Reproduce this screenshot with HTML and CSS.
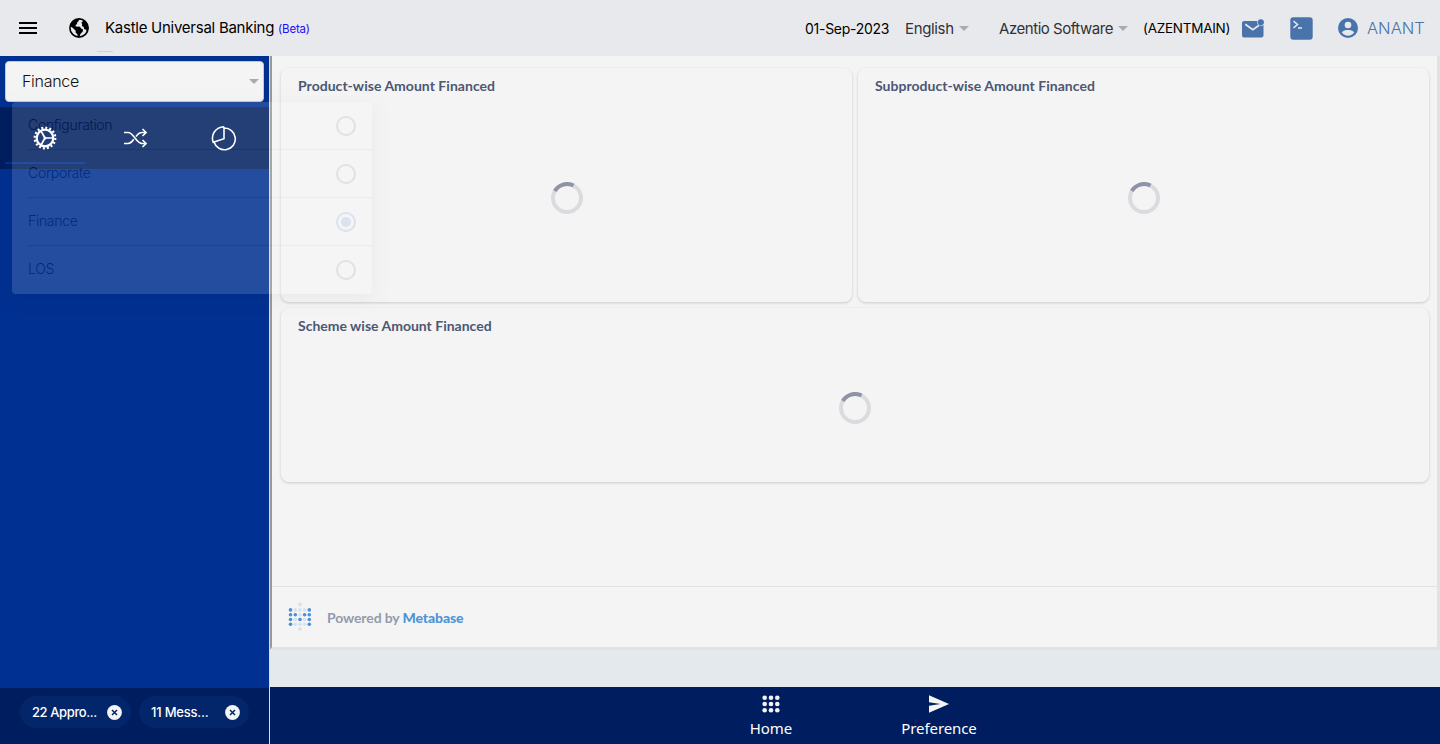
FILE: index.html
```html
<!DOCTYPE html>
<html lang="en">
<head>
<meta charset="utf-8">
<title>Kastle Universal Banking</title>
<link rel="stylesheet" href="styles.css">
</head>
<body>
<header class="topbar">
  <svg class="burger" width="18" height="12" viewBox="0 0 18 12"><path d="M0 0h18v2H0zM0 5h18v2H0zM0 10h18v2H0z"/></svg>
  <svg class="globe" width="20" height="20" viewBox="0 0 20 20"><circle cx="10" cy="10" r="9.1" fill="none" stroke="#000" stroke-width="1.6"/><path d="M2 5.500 7.500 1.200 10 1l-.3 2-1.600 1.400v1.500l-1.500 1 .1 1.600 4.200.2 1.300 1.900 1.800.8-.2 2-2.400 2.500-.8 2.600-1.700.4-.6-2.600L6.600 14.500l.1-1.700L3.600 9.700 1.200 8.200zM12.500 1.800l1.200.3-.2 1.800-1.300.7 1 1.300-.3 2 1.900 1.200.3 2.200 2.100.1.400 2.700 1.900-3.400-.4-4L16.300 3z"/></svg>
  <div class="brand"><span class="brand-name">Kastle Universal Banking</span><span class="beta">(Beta)</span><i class="brand-line"></i></div>
  <div class="date">01-Sep-2023</div>
  <div class="pick lang"><span>English</span><i class="caret"></i></div>
  <div class="pick company"><span>Azentio Software</span><i class="caret"></i></div>
  <div class="branch">(AZENTMAIN)</div>
  <svg class="mail" width="22" height="19" viewBox="0 0 22 19"><path d="M2 2h13.200a3.900 3.900 0 0 0 6.300 4v10.500a2 2 0 0 1-2 2H2a2 2 0 0 1-2-2V4a2 2 0 0 1 2-2z" fill="#4974ab"/><circle cx="18.800" cy="3.300" r="3.100" fill="#4974ab"/><path d="m3.300 5.200 7.500 5.600 6-4.300" fill="none" stroke="#e8e9ed" stroke-width="1.700"/></svg>
  <svg class="term" width="23" height="23" viewBox="0 0 23 23"><rect x=".3" y=".3" width="22.400" height="22.400" rx="3" fill="#4974ab"/><path d="m3.500 4.200 4 3.300-4 3.300M8 11h4" fill="none" stroke="#e8e9ed" stroke-width="1.500"/></svg>
  <svg class="user" width="20" height="20" viewBox="0 0 20 20"><circle cx="10" cy="10" r="10" fill="#4974ab"/><circle cx="10" cy="7" r="3.300" fill="#e8e9ed"/><path d="M3.800 14.300C5 12.500 7.700 12 10 12s5 .5 6.200 2.300a7.400 7.400 0 0 1-12.400 0z" fill="#e8e9ed"/></svg>
  <div class="username">ANANT</div>
</header>
<div class="shell">
  <aside class="side">
    <div class="select"><span>Finance</span><i class="caret"></i></div>
    <nav class="tabs">
      <div class="tab active"><svg width="26" height="26" viewBox="0 0 26 26"><g fill="none" stroke="#fff"><circle cx="13" cy="13" r="8.300" stroke-width="2.200"/><circle cx="13" cy="13" r="10.300" stroke-width="2.200" stroke-dasharray="2 2.045"/><path d="M13 13h8M13 13 9 6M13 13l-4 7" stroke-width="1.700"/></g><circle cx="13" cy="13" r="1.500" fill="#fff"/></svg></div>
      <div class="tab"><svg width="26" height="26" viewBox="0 0 26 26"><path d="M2 7.500h4c6 0 8 11 14 11h4M2 18.500h4c2.600 0 4.300-2 5.700-4.200M14 11.500c1.600-2.300 3.400-4 6-4h4M20.500 4l3.600 3.500-3.600 3.500M20.500 15l3.600 3.500-3.600 3.500" fill="none" stroke="#fff" stroke-width="1.600"/></svg></div>
      <div class="tab"><svg width="26" height="26" viewBox="0 0 26 26"><path d="M13 1.700v12L2.200 17.300M13 1.700C4.700 2.200-.6 9.300 2.200 17.300l1-.4M13 3A10.900 10.900 0 1 1 3 17.100" fill="none" stroke="#fff" stroke-width="1.600"/></svg></div>
    </nav>
    <div class="chips">
      <div class="chip"><span>22 Appro...</span><svg width="15" height="15" viewBox="0 0 15 15"><circle cx="7.500" cy="7.500" r="7.400" fill="#f4f4f4"/><path d="m5 5 5 5M10 5l-5 5" stroke="#03256c" stroke-width="1.500"/></svg></div>
      <div class="chip messages"><span>11 Mess...</span><svg width="15" height="15" viewBox="0 0 15 15"><circle cx="7.500" cy="7.500" r="7.400" fill="#f4f4f4"/><path d="m5 5 5 5M10 5l-5 5" stroke="#03256c" stroke-width="1.500"/></svg></div>
    </div>
  </aside>
  <main class="main">
    <section class="frame">
      <div class="cards">
        <article class="card"><h2>Product-wise Amount Financed</h2><svg class="spinner" width="32" height="32" viewBox="0 0 32 32"><circle cx="16" cy="16" r="14" fill="none" stroke="#dadbde" stroke-width="4"/><path d="M3.900 9A14 14 0 0 1 22.500 3.600" fill="none" stroke="#8e93a6" stroke-width="4"/></svg></article>
        <article class="card"><h2>Subproduct-wise Amount Financed</h2><svg class="spinner" width="32" height="32" viewBox="0 0 32 32"><circle cx="16" cy="16" r="14" fill="none" stroke="#dadbde" stroke-width="4"/><path d="M3.900 9A14 14 0 0 1 22.500 3.600" fill="none" stroke="#8e93a6" stroke-width="4"/></svg></article>
        <article class="card wide"><h2>Scheme wise Amount Financed</h2><svg class="spinner" width="32" height="32" viewBox="0 0 32 32"><circle cx="16" cy="16" r="14" fill="none" stroke="#dadbde" stroke-width="4"/><path d="M3.900 9A14 14 0 0 1 22.500 3.600" fill="none" stroke="#8e93a6" stroke-width="4"/></svg></article>
      </div>
      <footer class="powered">
        <svg width="24" height="30" viewBox="0 0 24 30"><g fill="#d5e2ef"><circle cx="12" cy="2.500" r="1.900"/><circle cx="7.300" cy="7.900" r="1.800"/><circle cx="12" cy="7.900" r="1.800"/><circle cx="16.600" cy="7.900" r="1.800"/><circle cx="12" cy="12.700" r="1.800"/><circle cx="7.300" cy="17.500" r="1.800"/><circle cx="16.600" cy="17.500" r="1.800"/><circle cx="7.300" cy="22.300" r="1.800"/><circle cx="12" cy="22.300" r="1.800"/><circle cx="16.600" cy="22.300" r="1.800"/><circle cx="12" cy="27.100" r="1.900"/></g><g fill="#4a90d9"><circle cx="2.500" cy="7.900" r="1.800"/><circle cx="21.300" cy="7.900" r="1.800"/><circle cx="2.500" cy="12.700" r="1.800"/><circle cx="7.300" cy="12.700" r="1.800"/><circle cx="16.600" cy="12.700" r="1.800"/><circle cx="21.300" cy="12.700" r="1.800"/><circle cx="2.500" cy="17.500" r="1.800"/><circle cx="12" cy="17.500" r="1.800"/><circle cx="21.300" cy="17.500" r="1.800"/><circle cx="2.500" cy="22.300" r="1.800"/><circle cx="21.300" cy="22.300" r="1.800"/></g></svg>
        <span>Powered by <b>Metabase</b></span>
      </footer>
    </section>
    <nav class="dock">
      <div class="dock-item"><svg width="18" height="18" viewBox="0 0 18 18" fill="#f4f4f4"><circle cx="2.700" cy="2.700" r="2.300"/><circle cx="9" cy="2.700" r="2.300"/><circle cx="15.300" cy="2.700" r="2.300"/><circle cx="2.700" cy="9" r="2.300"/><circle cx="9" cy="9" r="2.300"/><circle cx="15.300" cy="9" r="2.300"/><circle cx="2.700" cy="15.300" r="2.300"/><circle cx="9" cy="15.300" r="2.300"/><circle cx="15.300" cy="15.300" r="2.300"/></svg><span>Home</span></div>
      <div class="dock-item pref"><svg width="20" height="18" viewBox="0 0 20 18"><path d="M0 .3 20 9 0 17.700v-6.900L11.500 9 0 7.200z" fill="#f4f4f4"/></svg><span>Preference</span></div>
    </nav>
  </main>
</div>
<div class="menu">
  <div class="option"><span>Configuration</span><i class="radio"></i></div>
  <div class="option"><span>Corporate</span><i class="radio"></i></div>
  <div class="option"><span>Finance</span><i class="radio on"></i></div>
  <div class="option"><span>LOS</span><i class="radio"></i></div>
</div>
</body>
</html>
```
FILE: styles.css
```css
* { box-sizing: border-box; }
body { margin: 0; width: 1440px; height: 744px; overflow: hidden; font-family: Inter, sans-serif; color: #000; white-space: nowrap; }
svg { display: block; flex: none; }
.topbar { display: flex; align-items: center; height: 56px; padding-left: 19px; background: #e8e9ed; }
.globe { margin-left: 32px; }
.brand { position: relative; width: 700px; margin-left: 16px; font-size: 15px; letter-spacing: -0.26px; line-height: 20px; }
.beta { margin-left: 4px; font-size: 11.500px; color: #1a10f5; letter-spacing: -0.2px; }
.brand-line { position: absolute; left: -8px; top: 33px; width: 16px; height: 1px; background: #cfd0d4; }
.date { width: 100px; font-size: 14px; letter-spacing: -0.27px; }
.pick { display: flex; align-items: center; font-size: 15px; color: #303236; letter-spacing: -0.46px; padding-top: 1px; }
.caret { border: 5px solid transparent; border-top-color: #a9abaf; border-bottom: 0; }
.lang { width: 94px; letter-spacing: -0.35px; }
.lang .caret, .company .caret { margin-left: 5px; }
.company { width: 144px; }
.branch { width: 99px; font-size: 13.500px; letter-spacing: -0.25px; }
.term { margin-left: 26px; }
.user { margin-left: 25px; }
.username { margin-left: 9px; font-size: 16.500px; font-weight: 300; color: #4974ab; }
.shell { display: flex; height: 688px; }
.side { display: flex; flex-direction: column; width: 270px; background: #003091; border-right: 1px solid #d9dde6; }
.select { display: flex; align-items: center; justify-content: space-between; height: 41px; margin: 5px; padding: 0 4px 0 16px; background: #f4f4f4; border: 1px solid #c5c9d4; border-radius: 4px; font-size: 16px; font-weight: 300; letter-spacing: -0.3px; color: #111; }
.select span { padding-bottom: 2px; }
.tabs { display: flex; height: 62px; padding: 0 0 5px 5px; background: #001e5f; }
.tab { display: flex; flex: none; align-items: center; justify-content: center; width: 80px; margin-right: 9.500px; padding-top: 5px; }
.tab.active { border-bottom: 2px solid #003091; padding-top: 7px; }
.tab svg { position: relative; z-index: 2; }
.chips { display: flex; gap: 8px; height: 56px; margin-top: auto; padding: 8px 0 0 20px; background: #001e5f; }
.chip { display: flex; align-items: center; justify-content: space-between; width: 111px; height: 32px; padding: 0 9px 0 12px; border-radius: 16px; background: #032569; color: #fff; font-size: 13px; font-weight: 500; letter-spacing: -0.4px; }
.messages { width: 110px; letter-spacing: -0.2px; }
.main { display: flex; flex-direction: column; width: 1170px; background: #e4e9ed; }
.frame { display: flex; flex-direction: column; height: 594px; background: #f4f4f4; border: 3px solid #e2e2e2; border-top: 0; border-left: 2px solid #999; border-bottom-left-radius: 2px; }
.cards { display: grid; grid-template-columns: 571px 571px; grid-template-rows: 234px 174px; gap: 6px; padding: 12px 9px; }
.card { display: flex; flex-direction: column; align-items: center; border-radius: 8px; box-shadow: 0 1px 3px rgba(0,0,0,.18); background: #f4f4f4; font-family: Lato, sans-serif; }
.card h2 { align-self: stretch; margin: 9px 17px 0; font-size: 14px; line-height: 18px; font-weight: 700; letter-spacing: .03px; color: #4c5773; }
.spinner { margin-top: 87px; }
.wide { grid-column: 1 / 3; }
.wide h2 { letter-spacing: 0; }
.wide .spinner { margin-top: 57px; }
.powered { display: flex; align-items: center; height: 61px; margin-top: auto; padding-left: 16px; border-top: 1px solid #e0e1e3; font: 700 14px Lato, sans-serif; letter-spacing: -0.12px; color: #949aab; }
.powered span { margin-left: 15px; }
.powered b { color: #4f95d8; }
.dock { display: flex; height: 57px; margin-top: auto; padding-left: 461px; background: #001e5f; }
.dock-item { display: flex; flex-direction: column; align-items: center; width: 80px; padding-top: 8px; color: #fff; font: 15px/18px "Noto Sans", sans-serif; }
.dock-item span { margin-top: 6px; letter-spacing: -0.1px; }
.pref { margin-left: 88px; }
.menu { position: absolute; left: 12px; top: 102px; width: 360px; height: 192px; border-radius: 4px; background: #fff; box-shadow: 0 4px 16px rgba(0,0,0,.3); opacity: .14; }
.option { display: flex; align-items: center; justify-content: space-between; height: 48px; margin-left: 16px; padding-right: 16px; border-bottom: 1px solid #c0c0c0; font-size: 14px; letter-spacing: -0.3px; font-weight: 300; }
.option span { padding-bottom: 2px; }
.option:last-child { border-color: transparent; }
.radio { width: 20px; height: 20px; border: 2px solid #737373; border-radius: 50%; }
.radio.on { padding: 3px; border-color: #3880c8; background: #3880c8 content-box; }
```
